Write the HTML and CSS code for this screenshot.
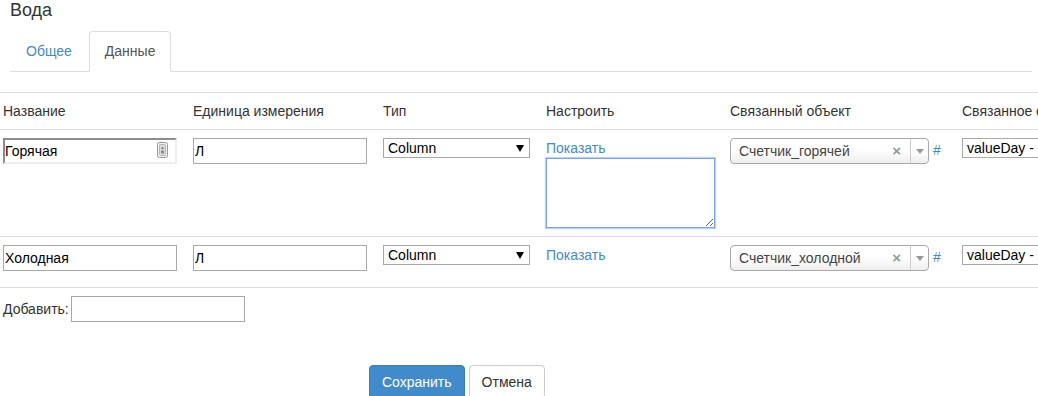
FILE: index.html
```html
<!DOCTYPE html>
<html lang="ru">
<head>
  <meta charset="UTF-8" />
  <title>Вода</title>
  <link rel="stylesheet" href="styles.css">
</head>
<body>
  <h3 class="title">Вода</h3>

  <!-- Tabs -->
  <ul class="tabs">
    <li><a href="#">Общее</a></li>
    <li class="active"><a href="#">Данные</a></li>
  </ul>

  <!-- Data grid -->
  <div class="grid">
    <div class="row head">
      <div class="cell">Название</div>
      <div class="cell">Единица измерения</div>
      <div class="cell">Тип</div>
      <div class="cell">Настроить</div>
      <div class="cell">Связанный объект</div>
      <div class="cell">Связанное свойство</div>
    </div>

    <div class="row">
      <div class="cell">
        <span class="field-wrap">
          <input class="field field-filled" type="text" value="Горячая">
          <svg class="pw-icon" width="11" height="16" viewBox="0 0 11 16">
            <rect x="0.5" y="0.5" width="10" height="15" rx="2" fill="#f2f2f2" stroke="#9a9a9a"/>
            <rect x="2.5" y="2.5" width="6" height="11" rx="1" fill="#dcdcdc" stroke="#b5b5b5"/>
            <path d="M5.5 4.5 L7 7 L4 7 Z" fill="#7a7a7a"/>
            <rect x="4" y="8.5" width="3" height="3" fill="#8a8a8a"/>
          </svg>
        </span>
      </div>
      <div class="cell"><input class="field" type="text" value="Л"></div>
      <div class="cell"><span class="plain-select">Column</span></div>
      <div class="cell">
        <a class="link" href="#">Показать</a>
        <textarea class="config"></textarea>
      </div>
      <div class="cell">
        <div class="picker">
          <span class="picker-choice">Счетчик_горячей<span class="picker-clear">×</span></span>
          <span class="picker-arrow"></span>
        </div>
        <a class="hash" href="#">#</a>
      </div>
      <div class="cell"><span class="plain-select wide">valueDay - Значение за день</span></div>
    </div>

    <div class="row short">
      <div class="cell"><input class="field" type="text" value="Холодная"></div>
      <div class="cell"><input class="field" type="text" value="Л"></div>
      <div class="cell"><span class="plain-select">Column</span></div>
      <div class="cell"><a class="link" href="#">Показать</a></div>
      <div class="cell">
        <div class="picker">
          <span class="picker-choice">Счетчик_холодной<span class="picker-clear">×</span></span>
          <span class="picker-arrow"></span>
        </div>
        <a class="hash" href="#">#</a>
      </div>
      <div class="cell"><span class="plain-select wide">valueDay - Значение за день</span></div>
    </div>
  </div>

  <div class="add">
    <label>Добавить:</label>
    <input class="field" type="text">
  </div>

  <div class="actions">
    <button class="btn btn-primary">Сохранить</button>
    <button class="btn">Отмена</button>
  </div>
</body>
</html>
```

FILE: styles.css
```css
html, body {
  overflow: hidden;
}
body {
  margin: 0;
  font-family: "Liberation Sans", Arial, sans-serif;
  font-size: 14px;
  line-height: 20px;
  color: #333;
  background: #fff;
}
a {
  color: #428bca;
  text-decoration: none;
}

.title {
  margin: 0 0 11px;
  padding-left: 10px;
  font-size: 18px;
  font-weight: normal;
  line-height: 20px;
}

/* tabs */
.tabs {
  list-style: none;
  margin: 0 6px 0 10px;
  padding: 0;
  display: flex;
  border-bottom: 1px solid #ddd;
}
.tabs li {
  margin: 0 1px -1px 0;
}
.tabs a {
  display: block;
  padding: 9px 15px 10px;
  border: 1px solid transparent;
  border-radius: 4px 4px 0 0;
}
.tabs .active a {
  color: #555;
  background: #fff;
  border-color: #ddd #ddd transparent;
}

/* grid */
.grid {
  margin-top: 20px;
  width: 1400px;
}
.row {
  display: grid;
  grid-template-columns: 190px 190px 163px 184px 232px 400px;
  padding: 8px 0;
  border-bottom: 1px solid #ddd;
}
.row.head {
  border-top: 1px solid #ddd;
}
.row.short {
  min-height: 34px;
}
.cell {
  padding-left: 3px;
  display: flex;
  flex-direction: column;
  align-items: flex-start;
}
.row .cell:nth-child(5) {
  flex-direction: row;
}

.field {
  box-sizing: border-box;
  width: 174px;
  height: 26px;
  padding: 0 1px;
  border: 1px solid #a9a9a9;
  font: 14px "Liberation Sans", Arial, sans-serif;
  color: #000;
  background: #fff;
}
.field-wrap {
  position: relative;
  display: inline-block;
}
.field-filled {
  border: 2px solid;
  border-color: #8d8d8d #eee #eee #8d8d8d;
  padding: 0;
}
.pw-icon {
  position: absolute;
  left: 154px;
  top: 4px;
}

.plain-select {
  box-sizing: border-box;
  position: relative;
  display: block;
  width: 147px;
  height: 20px;
  padding: 0 16px 0 4px;
  border: 1px solid #a9a9a9;
  font-size: 14px;
  line-height: 18px;
  color: #000;
  white-space: nowrap;
  overflow: hidden;
}
.plain-select::after {
  content: "";
  position: absolute;
  right: 5px;
  top: 6px;
  border-left: 4px solid transparent;
  border-right: 4px solid transparent;
  border-top: 7px solid #000;
}
.plain-select.wide {
  width: 220px;
}

.link {
  line-height: 20px;
}
.config {
  box-sizing: border-box;
  display: block;
  width: 169px;
  height: 70px;
  margin: 0;
  border: 1px solid #77a4e6;
  box-shadow: 0 0 1px 1px rgba(110, 160, 235, 0.45);
  outline: none;
}

/* select2 style picker */
.picker {
  box-sizing: border-box;
  display: flex;
  width: 199px;
  height: 26px;
  border: 1px solid #aaa;
  border-radius: 4px;
  background: linear-gradient(to bottom, #fff 0%, #fff 45%, #eee 100%);
  color: #444;
  line-height: 24px;
}
.picker-choice {
  flex: 1;
  display: flex;
  justify-content: space-between;
  padding-left: 8px;
  white-space: nowrap;
}
.picker-clear {
  color: #999;
  font-weight: bold;
  font-size: 15px;
  padding-right: 9px;
}
.picker-arrow {
  position: relative;
  width: 17px;
  border-left: 1px solid #ccc;
}
.picker-arrow::after {
  content: "";
  position: absolute;
  left: 5px;
  top: 10px;
  border-left: 4px solid transparent;
  border-right: 4px solid transparent;
  border-top: 5px solid #999;
}
.hash {
  margin-left: 4px;
  line-height: 20px;
  margin-top: 2px;
}

.add {
  display: flex;
  align-items: center;
  gap: 2px;
  margin-top: 8px;
  padding-left: 3px;
}
.add .field {
  width: 174px;
}

.actions {
  display: flex;
  gap: 4px;
  margin-top: 43px;
  padding-left: 369px;
}
.btn {
  height: 34px;
  padding: 6px 12px;
  font: 14px "Liberation Sans", Arial, sans-serif;
  line-height: 20px;
  color: #333;
  background: #fff;
  border: 1px solid #ccc;
  border-radius: 4px;
}
.btn-primary {
  color: #fff;
  background: #428bca;
  border-color: #357ebd;
}
```
